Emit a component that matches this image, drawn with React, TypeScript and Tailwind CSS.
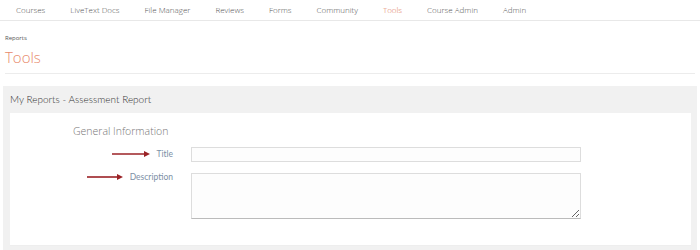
import { useState } from 'react'

const navItems = [
    'Courses',
    'LiveText Docs',
    'File Manager',
    'Reviews',
    'Forms',
    'Community',
    'Tools',
    'Course Admin',
    'Admin',
]

const Arrow = ({ width }: { width: number }) => (
    <svg width={width} height="6" viewBox={`0 0 ${width} 6`} className="shrink-0">
        <line x1="0" y1="3" x2={width - 5} y2="3" stroke="#9b2226" strokeWidth="1.6" />
        <polygon points={`${width - 6},0 ${width},3 ${width - 6},6`} fill="#9b2226" />
    </svg>
)

export default function App() {
    const [title, setTitle] = useState('')
    const [description, setDescription] = useState('')

    return (
        <div className="h-[250px] w-[700px] overflow-hidden bg-white font-['Open_Sans',sans-serif]">
            <nav className="flex h-[21px] items-center gap-[25px] border-b border-[#e8e8e8] pl-4 text-[8px] font-light text-[#555]">
                {navItems.map((item) => (
                    <span key={item} className={item === 'Tools' ? 'text-[#e0785a]' : ''}>
                        {item}
                    </span>
                ))}
            </nav>

            <div className="mx-[5px] border-b border-[#ececec] pb-[7px]">
                <p className="pt-[13px] text-[6px] text-[#555]">Reports</p>
                <h1 className="mt-[5px] text-[15px] font-light leading-[18px] text-[#e8896a]">Tools</h1>
            </div>

            <section className="mx-[3px] mt-[12px] w-[694px] bg-[#f1f1f1] pb-[6px] pr-[6px] pl-[7px]">
                <h2 className="-ml-[7px] flex h-[27px] items-center pl-[7px] font-['Lato',sans-serif] text-[10px] font-light text-[#333]">
                    My Reports - Assessment Report
                </h2>
                <div className="h-[133px] border-b border-[#eee] bg-white pt-[11px]">
                    <p className="pl-[63px] text-[10.5px] font-light text-[#777]">General Information</p>

                    <div className="mt-[7px] flex items-center">
                        <div className="flex w-[163px] items-center justify-end gap-[6px] font-['Lato',sans-serif] text-[8.5px] text-[#7d8fa6]">
                            <Arrow width={38} />
                            <span>Title</span>
                        </div>
                        <input
                            className="ml-[18px] h-[15px] w-[390px] border border-[#ddd] bg-[#fdfdfd] outline-none"
                            value={title}
                            onChange={(e) => setTitle(e.target.value)}
                        />
                    </div>

                    <div className="mt-[11px] flex items-start">
                        <div className="-mt-[2px] flex w-[163px] items-center justify-end gap-[7px] font-['Lato',sans-serif] text-[8.5px] text-[#7d8fa6]">
                            <Arrow width={36} />
                            <span>Description</span>
                        </div>
                        <textarea
                            className="ml-[18px] h-[46px] w-[390px] border border-[#ddd] border-b-[#bbb] bg-[#fdfdfd] outline-none"
                            value={description}
                            onChange={(e) => setDescription(e.target.value)}
                        />
                    </div>
                </div>
            </section>
        </div>
    )
}
